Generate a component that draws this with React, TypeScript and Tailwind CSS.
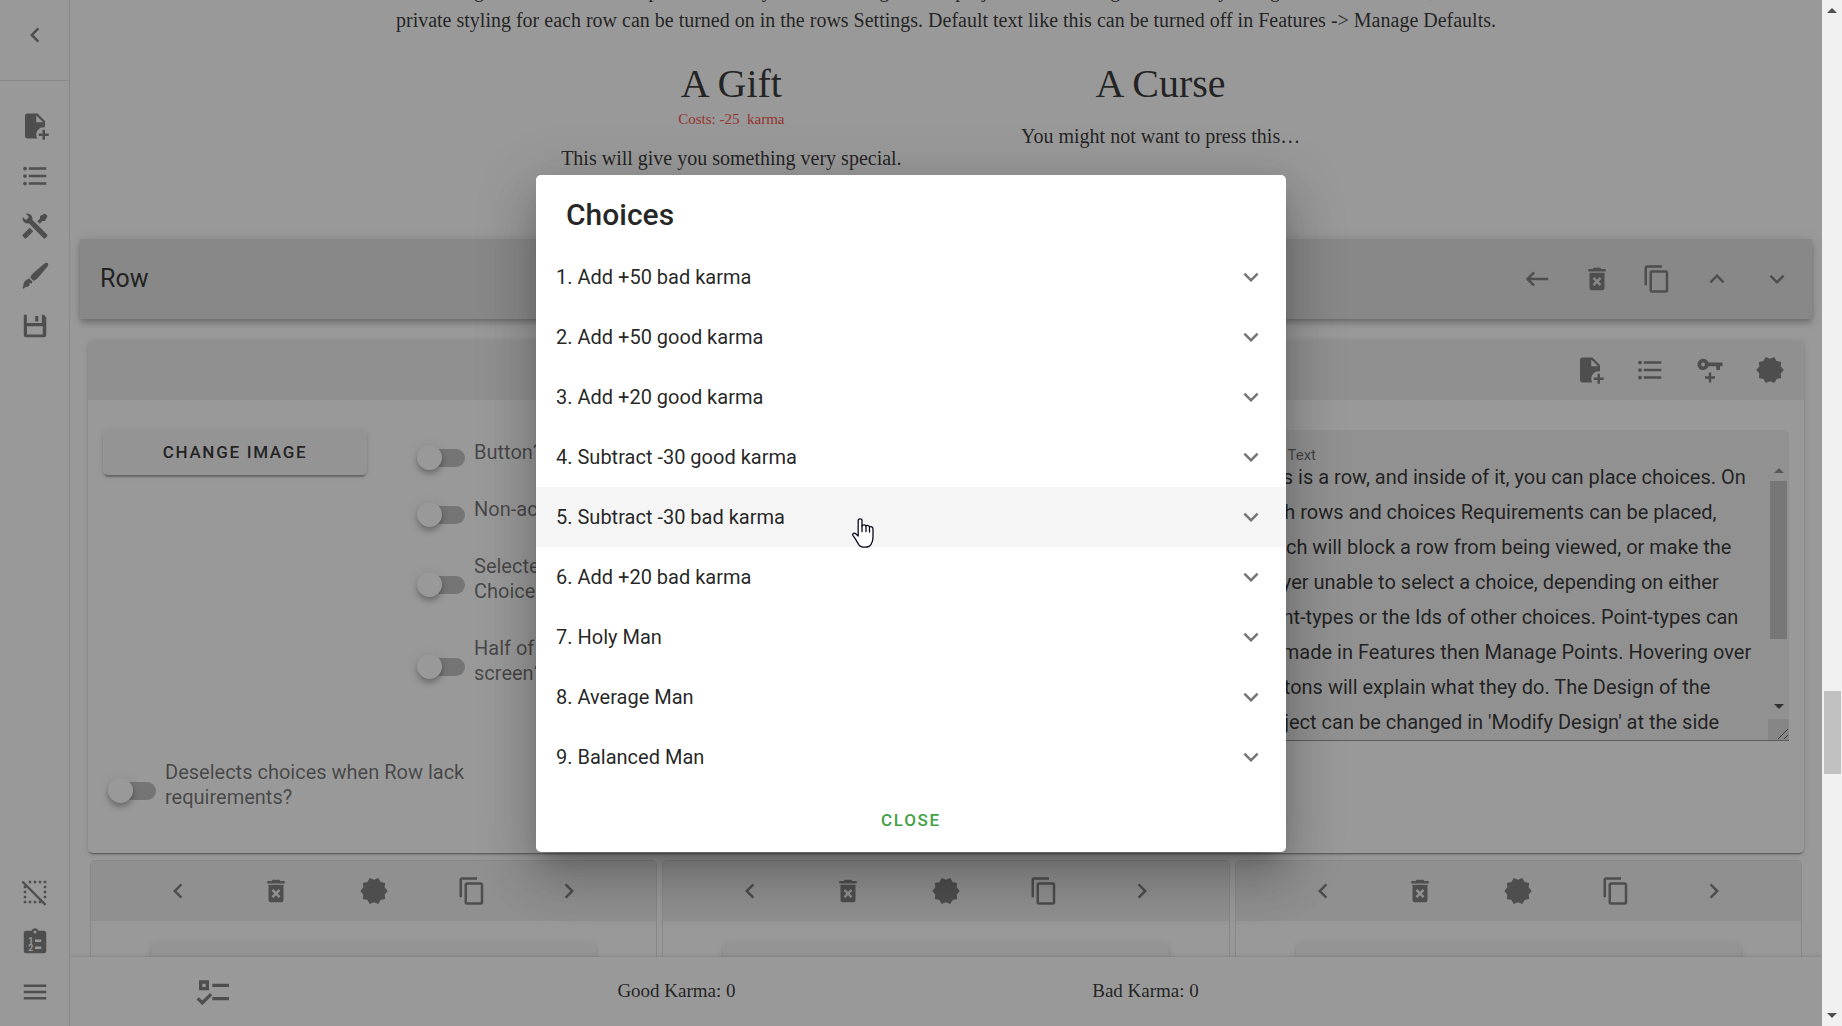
import React from "react";

const ICONS = {
  chevronLeft: "M15.41,16.58L10.83,12L15.41,7.41L14,6L8,12L14,18L15.41,16.58Z",
  chevronRight: "M8.59,16.58L13.17,12L8.59,7.41L10,6L16,12L10,18L8.59,16.58Z",
  chevronDown: "M7.41,8.58L12,13.17L16.59,8.58L18,10L12,16L6,10L7.41,8.58Z",
  chevronUp: "M7.41,15.41L12,10.83L16.59,15.41L18,14L12,8L6,14L7.41,15.41Z",
  filePlus:
    "M14 2H6C4.89 2 4 2.89 4 4V20C4 21.11 4.89 22 6 22H13.81C13.28 21.09 13 20.05 13 19C13 15.69 15.69 13 19 13C19.34 13 19.67 13.03 20 13.08V8L14 2M13 9V3.5L18.5 9H13M23 20H20V23H18V20H15V18H18V15H20V18H23V20Z",
  list: "M7,5H21V7H7V5M7,13V11H21V13H7M4,4.5A1.5,1.5 0 0,1 5.5,6A1.5,1.5 0 0,1 4,7.5A1.5,1.5 0 0,1 2.5,6A1.5,1.5 0 0,1 4,4.5M4,10.5A1.5,1.5 0 0,1 5.5,12A1.5,1.5 0 0,1 4,13.5A1.5,1.5 0 0,1 2.5,12A1.5,1.5 0 0,1 4,10.5M7,19V17H21V19H7M4,16.5A1.5,1.5 0 0,1 5.5,18A1.5,1.5 0 0,1 4,19.5A1.5,1.5 0 0,1 2.5,18A1.5,1.5 0 0,1 4,16.5Z",
  tools:
    "M21.71 20.29L20.29 21.71A1 1 0 0 1 18.88 21.71L7 9.85A3.81 3.81 0 0 1 6 10A4 4 0 0 1 2.22 4.7L4.76 7.24L5.29 6.71L6.71 5.29L7.24 4.76L4.7 2.22A4 4 0 0 1 10 6A3.81 3.81 0 0 1 9.85 7L21.71 18.88A1 1 0 0 1 21.71 20.29M2.29 18.88A1 1 0 0 0 2.29 20.29L3.71 21.71A1 1 0 0 0 5.12 21.71L10.59 16.25L7.76 13.42M20 2L16 4V6L13.83 8.17L15.83 10.17L18 8H20L22 4Z",
  brush:
    "M22.2 1.8C22.9 2.5 22.6 3.5 22 4.3L14.4 13.3C13.4 14.4 12.3 15.2 10.9 15.9L8.2 13.1C8.8 11.8 9.6 10.6 10.7 9.6L19.6 2C20.4 1.4 21.5 1.1 22.2 1.8M7.4 13.9L10 16.6C9.9 17.1 9.6 17.5 9.3 17.9L7.5 17.6L7.7 19.5C6.2 21.2 4.4 20 3.6 21.6C3.3 22 2.9 22.2 2.5 22.1L2.1 21C3.2 19.6 2.3 17.9 3.7 16.3C4.6 15.1 6 14.3 7.4 13.9Z",
  save: "M3.5 3H5.5V9.5H17.5V3H19L21 5V19A2 2 0 0 1 19 21H5A2 2 0 0 1 3 19V3.5A.5 .5 0 0 1 3.5 3M12.2 4H14.6V8.3H12.2V4M5.6 12.2V18.8H18.2V12.2H5.6Z",
  menu: "M3,6H21V8H3V6M3,11H21V13H3V11M3,16H21V18H3V16Z",
  back: "M21,11H6.83L10.41,7.41L9,6L3,12L9,18L10.41,16.58L6.83,13H21V11Z",
  trash:
    "M6,19A2,2 0 0,0 8,21H16A2,2 0 0,0 18,19V7H6V19M8.46,11.88L9.87,10.47L12,12.59L14.12,10.47L15.53,11.88L13.41,14L15.53,16.12L14.12,17.53L12,15.41L9.88,17.53L8.47,16.12L10.59,14L8.46,11.88M15.5,4L14.5,3H9.5L8.5,4H5V6H19V4H15.5Z",
  copy: "M19,21H8V7H19M19,5H8A2,2 0 0,0 6,7V21A2,2 0 0,0 8,23H19A2,2 0 0,0 21,21V7A2,2 0 0,0 19,5M16,1H4A2,2 0 0,0 2,3V17H4V3H16V1Z",
  decagram:
    "M23,12L20.56,9.22L20.9,5.54L17.29,4.72L15.4,1.54L12,3L8.6,1.54L6.71,4.72L3.1,5.53L3.44,9.21L1,12L3.44,14.78L3.1,18.47L6.71,19.29L8.6,22.47L12,21L15.4,22.46L17.29,19.28L20.9,18.46L20.56,14.78L23,12Z",
  keyPlus:
    "M6.5 3C8.46 3 10.13 4.25 10.74 6H22V9H20V12H17V9H10.74C10.13 10.75 8.46 12 6.5 12C4 12 2 10 2 7.5S4 3 6.5 3M6.5 6C5.67 6 5 6.67 5 7.5S5.67 9 6.5 9 8 8.33 8 7.5 7.33 6 6.5 6M11 17H8V19H11V22H13V19H16V17H13V14H11V17Z",
  checks:
    "M3,5H9V11H3V5M5,7V9H7V7H5M11,7H21V9H11V7M11,15H21V17H11V15M5,20L1.5,16.5L2.91,15.09L5,17.17L9.59,12.59L11,14L5,20Z",
};

type IconName = keyof typeof ICONS;

function Icon({ name, size = "size-[30px]" }: { name: IconName; size?: string }) {
  return (
    <svg viewBox="0 0 24 24" className={`${size} shrink-0 fill-[#757575]`} fillRule="evenodd" aria-hidden="true">
      <path d={ICONS[name]} />
    </svg>
  );
}

function IconButton({ name, label, className = "" }: { name: IconName; label: string; className?: string }) {
  return (
    <button type="button" aria-label={label} className={`grid place-items-center ${className}`}>
      <Icon name={name} />
    </button>
  );
}

const DOTS = [
  [7, 3], [11, 3], [15, 3], [19, 3], [19, 7], [19, 11], [19, 15],
  [3, 7], [3, 11], [3, 15], [3, 19], [7, 19], [11, 19], [15, 19],
];

function SelectOffIcon() {
  return (
    <svg viewBox="0 0 24 24" className="size-[30px] fill-[#757575]" aria-hidden="true">
      {DOTS.map(([x, y]) => (
        <rect key={`${x}-${y}`} x={x} y={y} width="2" height="2" />
      ))}
      <path d="M1.2 4.2L2.5 2.9L21.1 21.6L19.8 22.9Z" />
    </svg>
  );
}

function ClipboardIcon() {
  return (
    <svg viewBox="0 0 24 24" className="size-[30px] fill-[#757575]" aria-hidden="true">
      <path
        fillRule="evenodd"
        d="M19 3H14.8C14.4 1.8 13.3 1 12 1S9.6 1.8 9.2 3H5A2 2 0 0 0 3 5V19A2 2 0 0 0 5 21H19A2 2 0 0 0 21 19V5A2 2 0 0 0 19 3M12 2.8A1.2 1.2 0 1 1 12 5.2A1.2 1.2 0 1 1 12 2.8M12 10H17V12H12V10M12 15.5H17V17.5H12V15.5Z"
      />
      <g className="fill-white font-[Roboto] font-bold" fontSize="7" textAnchor="middle">
        <text x="8.6" y="13.2">1</text>
        <text x="8.6" y="19">2</text>
      </g>
    </svg>
  );
}

function Sidebar() {
  const top: [IconName, string][] = [
    ["filePlus", "Create new row"],
    ["list", "Row list"],
    ["tools", "Features"],
    ["brush", "Modify design"],
    ["save", "Save or load"],
  ];
  return (
    <nav className="relative z-10 flex w-[70px] shrink-0 flex-col border-r border-black/12 bg-white">
      <div className="flex h-[81px] flex-col items-center border-b border-black/12 pt-[10px]">
        <IconButton name="chevronLeft" label="Collapse" className="size-[50px]" />
      </div>
      <div className="flex flex-col items-center pt-5">
        {top.map(([name, label]) => (
          <IconButton key={name} name={name} label={label} className="size-[50px]" />
        ))}
      </div>
      <div className="mt-auto flex flex-col items-center pb-[9px]">
        <button type="button" aria-label="Deselect all" className="grid size-[50px] place-items-center">
          <SelectOffIcon />
        </button>
        <button type="button" aria-label="Id and title list" className="grid size-[50px] place-items-center">
          <ClipboardIcon />
        </button>
        <IconButton name="menu" label="Menu" className="size-[50px]" />
      </div>
    </nav>
  );
}

function Preview() {
  return (
    <section className="h-[239px] overflow-hidden font-['Liberation_Serif',serif] text-xl text-black/87">
      <div className="flex h-[35px] flex-col justify-end overflow-hidden text-center leading-[30px]">
        <p>
          Hovering over buttons will explain what they do. The Design of the project can be changed in 'Modify Design' at
          the side menu, while
        </p>
        <p>
          private styling for each row can be turned on in the rows Settings. Default text like this can be turned off in
          Features -&gt; Manage Defaults.
        </p>
      </div>
      <div className="mx-auto mt-[21px] grid w-[49%] grid-cols-2 text-center">
        <article>
          <h2 className="text-[40px] leading-[55px]">A Gift</h2>
          <p className="text-[15px] leading-4 whitespace-pre text-[#f44336]">Costs: -25  karma</p>
          <p className="mt-4 leading-[30px] whitespace-nowrap">This will give you something very special.</p>
        </article>
        <article>
          <h2 className="text-[40px] leading-[55px]">A Curse</h2>
          <p className="mt-[10px] leading-[30px]">You might not want to press this…</p>
        </article>
      </div>
    </section>
  );
}

function Toggle({ lines }: { lines: string[] }) {
  return (
    <label className="flex items-center gap-[9px]">
      <input
        type="checkbox"
        role="switch"
        className="relative mt-[10px] h-[25px] w-12 shrink-0 appearance-none before:absolute before:top-1 before:left-[3px] before:h-[18px] before:w-[45px] before:rounded-full before:bg-[#bdbdbd] after:absolute after:top-0 after:left-0 after:size-[25px] after:rounded-full after:bg-white after:shadow-[0_3px_5px_-1px_rgba(0,0,0,0.2),0_5px_6px_rgba(0,0,0,0.14),0_1px_12px_rgba(0,0,0,0.12)]"
      />
      <span className="py-1.5 text-xl leading-[25px] whitespace-nowrap text-black/60">
        {lines.map((l) => (
          <span key={l} className="block">
            {l}
          </span>
        ))}
      </span>
    </label>
  );
}

const ROW_TEXT = [
  "This is a row, and inside of it, you can place choices. On",
  "both rows and choices Requirements can be placed,",
  "which will block a row from being viewed, or make the",
  "player unable to select a choice, depending on either",
  "point-types or the Ids of other choices. Point-types can",
  "be made in Features then Manage Points. Hovering over",
  "buttons will explain what they do. The Design of the",
  "project can be changed in 'Modify Design' at the side",
].join("\n");

function RowTextField() {
  return (
    <div className="flex h-[311px] w-[549px] flex-col rounded-t-[5px] border-b border-black/42 bg-black/6">
      <label htmlFor="row-text" className="h-[30px] pt-4 pl-[15px] text-[15px] leading-[18px] text-black/60">
        Row Text
      </label>
      <div className="flex flex-1">
        <textarea
          id="row-text"
          defaultValue={ROW_TEXT}
          className="flex-1 resize-none overflow-hidden bg-transparent pl-[15px] text-xl leading-[35px] whitespace-pre text-black/87 outline-none"
        />
        <div className="flex w-[21px] flex-col items-center" aria-hidden="true">
          <svg viewBox="0 0 10 5" className="mt-2 mb-2 h-[5px] w-[10px] fill-[#888]">
            <path d="M0 5L5 0L10 5Z" />
          </svg>
          <div className="h-[158px] w-[17px] bg-[#c1c1c1]" />
          <svg viewBox="0 0 10 5" className="mt-auto mb-[10px] h-[5px] w-[10px] fill-[#404040]">
            <path d="M0 0H10L5 5Z" />
          </svg>
          <div className="flex h-[21px] w-full items-end justify-end bg-[#dcdcdc]">
            <svg viewBox="0 0 11 11" className="size-[11px] stroke-[#555]">
              <path d="M0 10L10 0M6 10L10 6" />
            </svg>
          </div>
        </div>
      </div>
    </div>
  );
}

const RAISED =
  "shadow-[0_4px_1px_-2px_rgba(0,0,0,0.2),0_2px_2px_rgba(0,0,0,0.14),0_1px_6px_rgba(0,0,0,0.12)]";

function RowEditor() {
  return (
    <>
      <header className="mx-[10px] flex h-20 items-center bg-[#e0e0e0] pr-[5px] pl-5 shadow-[0_2px_5px_-1px_rgba(0,0,0,0.2),0_5px_6px_rgba(0,0,0,0.14),0_1px_12px_rgba(0,0,0,0.12)]">
        <h1 className="mr-auto text-[25px] leading-10 text-black/87">Row</h1>
        <IconButton name="back" label="Back" className="size-[60px]" />
        <IconButton name="trash" label="Delete row" className="size-[60px]" />
        <IconButton name="copy" label="Clone row" className="size-[60px]" />
        <IconButton name="chevronUp" label="Move up" className="size-[60px]" />
        <IconButton name="chevronDown" label="Move down" className="size-[60px]" />
      </header>
      <section className="mx-[18px] mt-[21px] rounded-[5px] bg-white shadow-[0_3px_1px_-2px_rgba(0,0,0,0.3),0_2px_2px_rgba(0,0,0,0.14),0_1px_6px_rgba(0,0,0,0.12)]">
        <div className="flex h-[60px] items-center justify-end rounded-t-[5px] bg-[#eeeeee] pr-1">
          <IconButton name="filePlus" label="Add choice" className="size-[60px]" />
          <IconButton name="list" label="Choice list" className="size-[60px]" />
          <IconButton name="keyPlus" label="Add requirement" className="size-[60px]" />
          <IconButton name="decagram" label="Settings" className="size-[60px]" />
        </div>
        <div className="flex px-[15px] pt-[30px] pb-[111px]">
          <div className="w-[314px] shrink-0">
            <button
              type="button"
              className={`h-[45px] w-[264px] rounded-[5px] bg-[#f5f5f5] text-[17px] font-medium tracking-widest text-black/87 ${RAISED}`}
            >
              CHANGE IMAGE
            </button>
          </div>
          <div className="mt-1 flex flex-1 flex-col gap-5">
            <Toggle lines={["Button?"]} />
            <Toggle lines={["Non-active?"]} />
            <Toggle lines={["Selected", "Choices?"]} />
            <Toggle lines={["Half of", "screen?"]} />
          </div>
          <RowTextField />
        </div>
        <div className="-mt-[98px] px-5 pb-[37px]">
          <Toggle lines={["Deselects choices when Row lack", "requirements?"]} />
        </div>
      </section>
    </>
  );
}

function ChoiceCard() {
  return (
    <article className="rounded-t-[5px] border border-b-0 border-black/12 bg-white">
      <div className="grid h-[60px] grid-cols-5 rounded-t bg-[#eeeeee] px-[38px]">
        <IconButton name="chevronLeft" label="Move left" />
        <IconButton name="trash" label="Delete choice" />
        <IconButton name="decagram" label="Choice settings" />
        <IconButton name="copy" label="Clone choice" />
        <IconButton name="chevronRight" label="Move right" />
      </div>
      <div className="px-[60px] pt-[22px]">
        <button type="button" aria-label="Change image" className={`h-[45px] w-full rounded-[5px] bg-[#f5f5f5] ${RAISED}`} />
      </div>
    </article>
  );
}

function PointBar() {
  return (
    <footer className="relative grid h-[69px] shrink-0 grid-cols-[287fr_85fr_469fr_469fr_442fr] items-center bg-white text-center font-['Liberation_Serif',serif] text-[19px] text-black/87 shadow-[0_0_5px_rgba(0,0,0,0.2)]">
      <button type="button" aria-label="Backpack" className="grid place-items-center">
        <Icon name="checks" size="size-10" />
      </button>
      <span />
      <span>Good Karma: 0</span>
      <span>Bad Karma: 0</span>
    </footer>
  );
}

function PageScrollbar() {
  return (
    <div className="relative flex w-5 shrink-0 flex-col items-center bg-[#f1f1f1]" aria-hidden="true">
      <svg viewBox="0 0 10 5" className="mt-2 h-[5px] w-[10px] fill-[#505050]">
        <path d="M0 5L5 0L10 5Z" />
      </svg>
      <div className="flex w-full flex-1 flex-col items-center">
        <div className="grow-[678]" />
        <div className="h-[83px] w-[17px] bg-[#c1c1c1]" />
        <div className="grow-[239]" />
      </div>
      <svg viewBox="0 0 10 5" className="mb-2 h-[5px] w-[10px] fill-[#505050]">
        <path d="M0 0H10L5 5Z" />
      </svg>
    </div>
  );
}

function HandCursor() {
  return (
    <svg
      viewBox="0 0 22 30"
      className="pointer-events-none absolute top-[31px] left-[316px] h-[30px] w-[22px] fill-white stroke-[#0a0a1e]"
      strokeWidth="1.3"
      strokeLinejoin="round"
      strokeLinecap="round"
      aria-hidden="true"
    >
      <path d="M6.2 18V2.6C6.2 .2 10 .2 10 2.6V8.2C10.6 6.4 13.6 6.6 14 8C15 7 17.2 7.4 17.5 9C18.8 8.2 21 9 21 11V19C21 22 20.4 24 19.2 26C18.3 28.3 16.5 29.2 13 29.2C9.6 29.2 8 28.4 6.6 26.3L3.2 20.6L1 17.6C0 15.8 2 14.6 3.4 15.6Z" />
      <path d="M10 8V13.5M14 8V13.5M17.5 9V14" fill="none" />
    </svg>
  );
}

const CHOICES = [
  "Add +50 bad karma",
  "Add +50 good karma",
  "Add +20 good karma",
  "Subtract -30 good karma",
  "Subtract -30 bad karma",
  "Add +20 bad karma",
  "Holy Man",
  "Average Man",
  "Balanced Man",
];

function ChoicesDialog() {
  return (
    <div className="absolute inset-y-0 right-5 left-0 z-20 grid place-items-center bg-[#212121]/46">
      <div
        role="dialog"
        aria-modal="true"
        aria-labelledby="choices-title"
        className="w-[750px] rounded-[5px] bg-white shadow-[0_14px_19px_-9px_rgba(0,0,0,0.2),0_30px_48px_4px_rgba(0,0,0,0.14),0_11px_58px_10px_rgba(0,0,0,0.12)]"
      >
        <h2 id="choices-title" className="px-[30px] pt-5 pb-3 text-[30px] leading-10 font-medium text-black/87">
          Choices
        </h2>
        <ul>
          {CHOICES.map((choice, i) => (
            <li key={choice} className="relative">
              <button
                type="button"
                className={`flex h-[60px] w-full items-center justify-between px-5 text-left text-xl text-black/87 ${
                  i === 4 ? "bg-[#f5f5f5]" : ""
                }`}
              >
                {i + 1}. {choice}
                <Icon name="chevronDown" />
              </button>
              {i === 4 && <HandCursor />}
            </li>
          ))}
        </ul>
        <div className="flex justify-center pt-3 pb-2">
          <button type="button" className="h-[45px] px-5 text-[17px] font-medium tracking-widest text-[#43a047]">
            CLOSE
          </button>
        </div>
      </div>
    </div>
  );
}

export default function App() {
  return (
    <div className="relative flex h-screen overflow-hidden bg-white font-[Roboto,sans-serif]">
      <Sidebar />
      <div className="flex min-w-0 flex-1 flex-col">
        <main className="min-h-0 flex-1 overflow-hidden">
          <Preview />
          <RowEditor />
          <div className="mx-5 mt-[7px] grid grid-cols-3 gap-[5px]">
            <ChoiceCard />
            <ChoiceCard />
            <ChoiceCard />
          </div>
        </main>
        <PointBar />
      </div>
      <PageScrollbar />
      <ChoicesDialog />
    </div>
  );
}
